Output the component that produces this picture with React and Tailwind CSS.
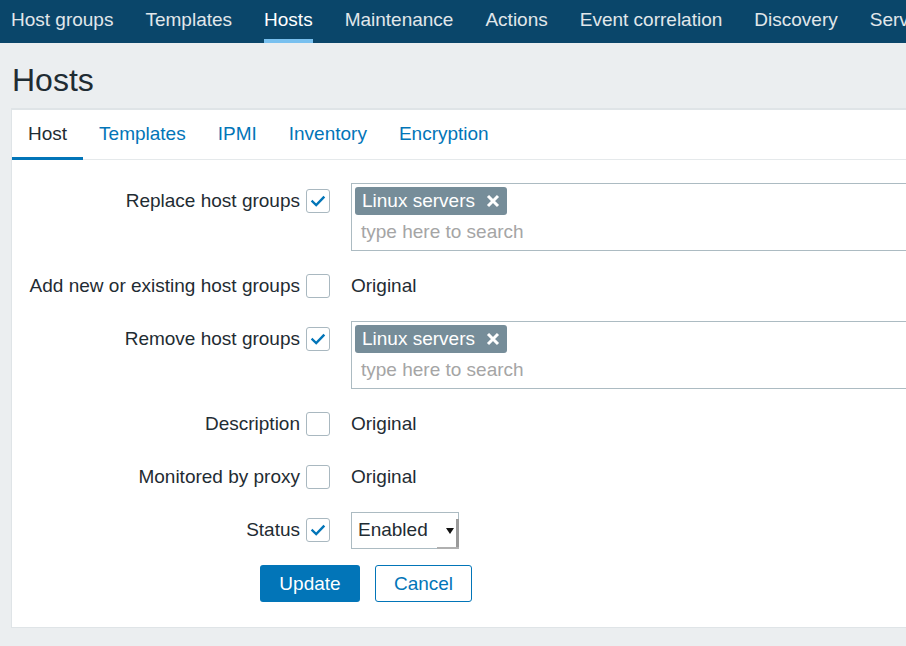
import React from 'react';

const navItems = ['Host groups', 'Templates', 'Hosts', 'Maintenance', 'Actions', 'Event correlation', 'Discovery', 'Services'];
const tabs = ['Host', 'Templates', 'IPMI', 'Inventory', 'Encryption'];

function Check({ checked }) {
  return (
    <div className="w-[24px] h-[24px] shrink-0 rounded-[3px] border border-[#a9b8c0] bg-white flex items-center justify-center">
      {checked && (
        <svg width="16" height="16" viewBox="0 0 16 16" fill="none">
          <path d="M2.5 8.5 L6.2 12 L13.5 4.5" stroke="#0275b8" strokeWidth="2.4" strokeLinecap="square" />
        </svg>
      )}
    </div>
  );
}

function Label({ children }) {
  return <div className="w-[294px] shrink-0 h-[36px] flex items-center justify-end pr-[6px] whitespace-nowrap">{children}</div>;
}

function MultiSelect() {
  return (
    <div className="w-[700px] h-[68px] border border-[#acbbc2] bg-white px-[3px] pt-[3px]">
      <div className="inline-flex items-center h-[28px] rounded-[3px] bg-[#768d99] text-white pl-[7px] pr-[7px]">
        <span>Linux servers</span>
        <svg className="ml-[11px]" width="14" height="14" viewBox="0 0 14 14">
          <path d="M2 2 L12 12 M12 2 L2 12" stroke="#fff" strokeWidth="3" />
        </svg>
      </div>
      <div className="pl-[6px] h-[34px] flex items-center text-[#a5a5a5]">type here to search</div>
    </div>
  );
}

function Row({ label, checked, children, top }) {
  return (
    <div className={`flex ${top ? 'items-start' : 'items-center h-[36px]'}`}>
      <Label>{label}</Label>
      <div className="h-[36px] flex items-center">
        <Check checked={checked} />
      </div>
      <div className="ml-[21px]">{children}</div>
    </div>
  );
}

export default function App() {
  return (
    <div className="w-[906px] h-[646px] overflow-hidden bg-[#ebeef0] text-[#1f2c33] text-[19px]" style={{ fontFamily: '"Liberation Sans", Arial, sans-serif' }}>
      <div className="h-[43px] bg-[#0a466a] flex pl-[11px] gap-[32px] whitespace-nowrap">
        {navItems.map(n => (
          <div key={n} className={`relative h-full flex items-center pb-[2px] ${n === 'Hosts' ? 'text-white' : 'text-[#e1e7ea]'}`}>
            {n}
            {n === 'Hosts' && <div className="absolute left-0 right-0 bottom-0 h-[4px] bg-[#78c0ef]" />}
          </div>
        ))}
      </div>

      <h1 className="pl-[12px] pt-[17px] h-[65px] text-[32px] leading-[40px]">Hosts</h1>

      <div className="ml-[11px] w-[1200px] h-[520px] bg-white border-t-2 border-b border-l border-[#dfe4e7]">
        <div className="flex h-[50px] border-b border-[#e5e9eb]">
          {tabs.map(t => (
            <div key={t} className={`relative h-full px-[16px] flex items-center pb-[1px] ${t === 'Host' ? 'text-[#1f2c33]' : 'text-[#0275b8]'}`}>
              {t}
              {t === 'Host' && <div className="absolute left-0 right-0 bottom-[-1px] h-[3px] bg-[#0275b8]" />}
            </div>
          ))}
        </div>

        <div className="pt-[23px] flex flex-col gap-[17px]">
          <Row label="Replace host groups" checked top>
            <MultiSelect />
          </Row>
          <Row label="Add new or existing host groups">Original</Row>
          <Row label="Remove host groups" checked top>
            <MultiSelect />
          </Row>
          <Row label="Description">Original</Row>
          <Row label="Monitored by proxy">Original</Row>
          <Row label="Status" checked>
            <div className="relative w-[108px] h-[37px] border border-[#acbbc2] bg-white flex items-center pl-[6px]">
              Enabled
              <svg className="absolute right-[4px] top-[15px]" width="8" height="6" viewBox="0 0 8 6">
                <path d="M0 0 L8 0 L4 6 Z" fill="#111" />
              </svg>
              <div className="absolute right-[-1px] top-[6px] bottom-[-1px] w-[3px] bg-[#9a9a9a]" />
              <div className="absolute right-[-1px] bottom-[-1px] w-[22px] h-[2px] bg-[#b0b0b0]" />
            </div>
          </Row>
          <div className="flex gap-[15px] pl-[248px]">
            <button className="w-[100px] h-[37px] pt-[2px] rounded-[3px] bg-[#0275b8] text-white">Update</button>
            <button className="w-[97px] h-[37px] pt-[2px] rounded-[3px] border border-[#0275b8] bg-white text-[#0275b8]">Cancel</button>
          </div>
        </div>
      </div>
    </div>
  );
}
